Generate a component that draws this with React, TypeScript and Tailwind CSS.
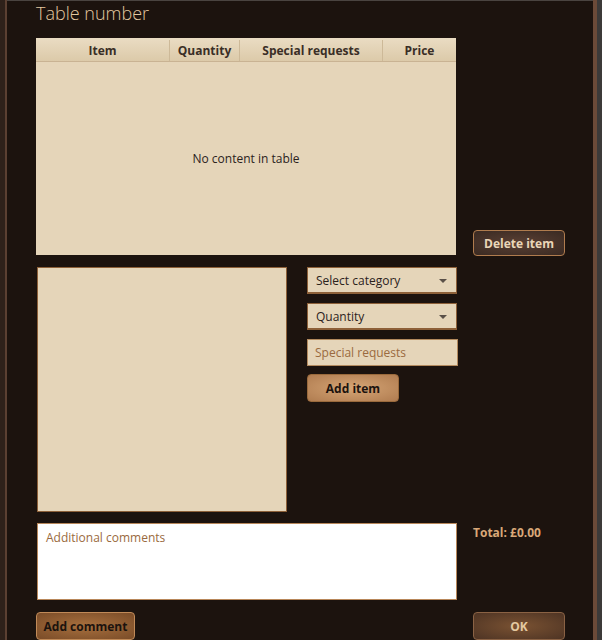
const font = { fontFamily: '"Open Sans", "Noto Sans", sans-serif' };

function Caret() {
  return (
    <svg width="8" height="4" viewBox="0 0 8 4" className="shrink-0">
      <path d="M0 0h8L4 4z" fill="#5a5048" />
    </svg>
  );
}

export default function App() {
  return (
    <div className="flex h-[640px] w-[602px] overflow-hidden bg-[#1c130e] text-[12px]" style={font}>
      {/* left frame */}
      <div className="w-[5px] shrink-0 bg-[#2e211a]" />
      <div className="w-[2px] shrink-0 bg-[#5b4032]" />

      <div className="flex flex-1 flex-col border-t border-[#4a4440] pl-[29px]">
        <div className="h-[37px] text-[18px] font-light leading-[24px] text-[#e4c9a0]">Table number</div>

        {/* order table + delete */}
        <div className="flex items-end gap-[17px]">
          <div className="flex h-[217px] w-[420px] flex-col bg-[#e5d5b9]">
            <div className="flex h-[24px] border-b border-[#c9b393] bg-gradient-to-b from-[#eadcc3] to-[#dccaa9] pt-[2px] font-bold text-[#3a2e26]">
              <div className="flex w-[134px] items-center justify-center border-r border-[#cdb998]">Item</div>
              <div className="flex w-[70px] items-center justify-center border-r border-[#cdb998]">Quantity</div>
              <div className="flex w-[143px] items-center justify-center border-r border-[#cdb998]">Special requests</div>
              <div className="flex flex-1 items-center justify-center">Price</div>
            </div>
            <div className="flex flex-1 items-center justify-center text-[#2b221c]">No content in table</div>
          </div>
          <button className="mb-[-1px] h-[26px] w-[92px] rounded-[4px] border border-[#b07c4e] bg-[radial-gradient(ellipse_at_center,#5a4034,#3a2a22)] pt-[2px] font-bold text-[#ead6b8]">
            Delete item
          </button>
        </div>

        {/* picker row */}
        <div className="mt-[12px] flex gap-[20px] pl-[1px]">
          <div className="h-[245px] w-[250px] border border-[#8d6038] bg-[#e5d5b9]" />
          <div className="flex w-[150px] flex-col">
            <div className="flex h-[27px] items-center justify-between border border-b-2 border-[#8d6038] bg-[#e5d5b9] pl-[8px] pr-[9px] pt-[2px] text-[#2b221c]">
              <span>Select category</span>
              <Caret />
            </div>
            <div className="mt-[9px] flex h-[27px] items-center justify-between border border-b-2 border-[#8d6038] bg-[#e5d5b9] pl-[8px] pr-[9px] pt-[2px] text-[#2b221c]">
              <span>Quantity</span>
              <Caret />
            </div>
            <div className="mt-[9px] flex h-[27px] w-[151px] items-center border border-[#b38a5e] bg-[#e5d5b9] pl-[7px] pt-[1px] text-[#9a6a40]">
              Special requests
            </div>
            <button className="mt-[8px] h-[28px] w-[92px] rounded-[4px] border border-[#9a6a3c] bg-[radial-gradient(ellipse_at_center,#d6a676,#b07c50)] pt-[1px] font-bold text-[#1c130e]">
              Add item
            </button>
          </div>
        </div>

        {/* comments */}
        <div className="mt-[11px] flex gap-[16px] pl-[1px]">
          <div className="h-[77px] w-[420px] border border-[#b8875a] bg-white px-[8px] pt-[5px] text-[#9a6a40]">
            Additional comments
          </div>
          <div className="pt-[1px] font-bold text-[#d9a878]">Total: £0.00</div>
        </div>

        {/* bottom buttons */}
        <div className="mt-[12px] flex gap-[338px]">
          <button className="h-[28px] w-[99px] rounded-[4px] border border-[#c08a58] bg-[radial-gradient(ellipse_at_center,#a8703e,#7a4c28)] pt-[1px] font-bold text-[#1c130e]">
            Add comment
          </button>
          <button className="h-[28px] w-[92px] rounded-[4px] border border-[#8a6244] bg-[radial-gradient(ellipse_at_center,#7a5232,#4e3424)] pt-[1px] font-bold text-[#e4c9a0]">
            OK
          </button>
        </div>
      </div>

      {/* right frame */}
      <div className="w-[4px] shrink-0 bg-[#6b4a38]" />
      <div className="w-[5px] shrink-0 bg-[#3c3a39]" />
    </div>
  );
}
